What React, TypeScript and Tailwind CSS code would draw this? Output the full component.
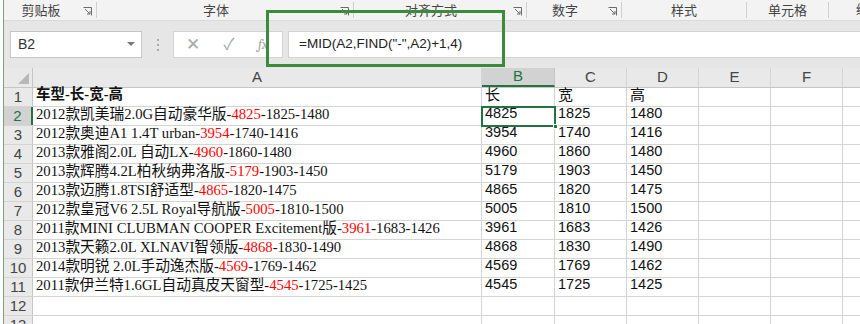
import * as React from "react";

const UI = { fontFamily: '"Liberation Sans", "Noto Sans CJK SC", sans-serif' };
const SERIF = { fontFamily: '"Liberation Serif", "Noto Sans CJK SC", serif' };

const groups = [
  { label: "剪贴板", w: "w-[93px]", launcher: true },
  { label: "字体", w: "w-[257px]", launcher: true },
  { label: "对齐方式", w: "w-[173px]", launcher: true },
  { label: "数字", w: "w-[95px]", launcher: true },
  { label: "样式", w: "w-[125px]", launcher: false },
  { label: "单元格", w: "w-[82px]", launcher: false },
];

const cars = [
  "2012款凯美瑞2.0G自动豪华版-4825-1825-1480",
  "2012款奥迪A1 1.4T urban-3954-1740-1416",
  "2013款雅阁2.0L 自动LX-4960-1860-1480",
  "2013款辉腾4.2L柏秋纳弗洛版-5179-1903-1450",
  "2013款迈腾1.8TSI舒适型-4865-1820-1475",
  "2012款皇冠V6 2.5L Royal导航版-5005-1810-1500",
  "2011款MINI CLUBMAN COOPER Excitement版-3961-1683-1426",
  "2013款天籁2.0L XLNAVI智领版-4868-1830-1490",
  "2014款明锐 2.0L手动逸杰版-4569-1769-1462",
  "2011款伊兰特1.6GL自动真皮天窗型-4545-1725-1425",
];

const cols = ["A", "B", "C", "D", "E", "F", ""];
const colW = ["w-[449px]", "w-[73px]", "w-[72px]", "w-[72px]", "w-[72px]", "w-[72px]", "w-[40px]"];

const Launcher = () => (
  <svg width="9" height="9" viewBox="0 0 9 9" className="mt-[3px]">
    <path d="M0.5 0.5 H8.5 V8.5" fill="none" stroke="#6b6b6b" strokeWidth="1" />
    <path d="M2 2 L7 7 M4 7 H7 V4" fill="none" stroke="#6b6b6b" strokeWidth="1" />
  </svg>
);

function Cell({
  w,
  children,
  className = "",
}: {
  w: string;
  children?: React.ReactNode;
  className?: string;
}) {
  return (
    <div
      className={`${w} shrink-0 h-full border-r border-[#d4d4d4] flex items-end pl-[3px] whitespace-nowrap overflow-visible ${className}`}
    >
      {children}
    </div>
  );
}

function Row({ n, children, active }: { n: number; children: React.ReactNode; active?: boolean }) {
  return (
    <div className="flex h-[19px] border-b border-[#d4d4d4]">
      <div
        className={`w-[29px] shrink-0 flex items-center justify-center text-[15px] ${
          active
            ? "bg-[#d2d2d2] text-[#217346] border-r-2 border-[#217346]"
            : "bg-[#e9e9e9] text-[#444] border-r border-[#c6c6c6]"
        }`}
        style={UI}
      >
        {n}
      </div>
      {children}
    </div>
  );
}

export default function App() {
  return (
    <div className="w-[860px] h-[324px] overflow-hidden flex bg-white relative" style={UI}>
      <div className="w-[3px] shrink-0 bg-white" />
      <div className="w-px shrink-0 bg-[#7fa07f]" />
      <div className="flex-1 flex flex-col min-w-0">
        {/* ribbon group labels */}
        <div className="h-[20px] flex bg-[#f3f3f3] text-[13px] text-[#444] shrink-0">
          {groups.map((g) => (
            <div key={g.label} className={`${g.w} shrink-0 flex items-center border-r border-[#d0d0d0] my-[2px]`}>
              <div className="flex-1 text-center leading-none">{g.label}</div>
              {g.launcher ? (
                <div className="w-[18px] flex justify-center">
                  <Launcher />
                </div>
              ) : null}
            </div>
          ))}
          <div className="flex items-center pl-[27px] whitespace-nowrap">编辑</div>
        </div>

        {/* formula bar */}
        <div className="h-[48px] bg-[#e6e6e6] border-t border-[#dadada] flex items-start pt-[10px] shrink-0">
          <div className="ml-[6px] w-[132px] h-[27px] bg-white border border-[#c6c6c6] flex items-center justify-between pl-[7px] pr-[6px]">
            <span className="text-[14px] text-[#333]">B2</span>
            <svg width="8" height="5" viewBox="0 0 8 5">
              <path d="M0 0 H8 L4 4 Z" fill="#7a7a7a" />
            </svg>
          </div>
          <div className="w-[31px] h-[27px] flex flex-col items-center justify-center gap-[3px]">
            <div className="w-[2px] h-[2px] bg-[#aaa]" />
            <div className="w-[2px] h-[2px] bg-[#aaa]" />
            <div className="w-[2px] h-[2px] bg-[#aaa]" />
          </div>
          <div className="w-[110px] h-[27px] bg-white border border-[#d4d4d4] flex items-center text-[#a8a8a8]">
            <span className="w-[38px] text-center text-[17px]">✕</span>
            <span className="w-[34px] text-center text-[16px]">✓</span>
            <span className="w-[34px] text-center italic text-[14px] font-serif">fx</span>
          </div>
          <div className="ml-[5px] flex-1 h-[27px] bg-white border-y border-l border-[#d4d4d4] flex items-center pl-[10px] text-[13.5px] text-[#222]">
            =MID(A2,FIND("-",A2)+1,4)
          </div>
        </div>

        {/* column headers */}
        <div className="flex h-[20px] shrink-0 bg-[#e9e9e9] border-b border-[#c6c6c6] text-[15px] text-[#444]">
          <div className="w-[29px] shrink-0 border-r border-[#c6c6c6] flex items-end justify-end pr-[3px] pb-[3px]">
            <svg width="11" height="11" viewBox="0 0 11 11">
              <path d="M11 0 V11 H0 Z" fill="#b8b8b8" />
            </svg>
          </div>
          {cols.map((c, i) => (
            <div
              key={i}
              className={`${colW[i]} shrink-0 flex items-center justify-center border-r ${
                c === "B"
                  ? "bg-[#d2d2d2] text-[#217346] border-b-2 border-b-[#217346] border-r-[#c6c6c6]"
                  : "border-[#d4d4d4]"
              }`}
            >
              {c}
            </div>
          ))}
        </div>

        {/* grid */}
        <div className="flex flex-col text-[#111]">
          <Row n={1}>
            <Cell w={colW[0]}>
              <span className="font-bold text-[14.5px]" style={SERIF}>
                车型-长-宽-高
              </span>
            </Cell>
            {["长", "宽", "高"].map((t, i) => (
              <Cell key={t} w={colW[i + 1]}>
                <span className="text-[15px]" style={UI}>
                  {t}
                </span>
              </Cell>
            ))}
            <Cell w={colW[4]} />
            <Cell w={colW[5]} />
            <Cell w={colW[6]} />
          </Row>
          {cars.map((s, r) => {
            const idx = s.indexOf("-", s.indexOf("款"));
            const head = s.slice(0, idx + 1);
            const red = s.slice(idx + 1, idx + 5);
            const tail = s.slice(idx + 5);
            const nums = s.slice(idx + 1).split("-");
            return (
              <Row key={r} n={r + 2} active={r === 0}>
                <Cell w={colW[0]}>
                  <span className="text-[14.7px]" style={SERIF}>
                    {head}
                    <span className="text-[#ff0000]">{red}</span>
                    {tail}
                  </span>
                </Cell>
                {nums.map((v, i) => (
                  <Cell key={i} w={colW[i + 1]} className={i === 0 && r === 0 ? "relative" : ""}>
                    <span className="text-[14.5px]" style={UI}>
                      {v}
                    </span>
                    {i === 0 && r === 0 ? (
                      <div className="absolute -left-[1px] -top-[1px] w-[75px] h-[21px] border-2 border-[#217346]">
                        <div className="absolute -right-[4px] -bottom-[4px] w-[5px] h-[5px] bg-[#217346] border border-white" />
                      </div>
                    ) : null}
                  </Cell>
                ))}
                <Cell w={colW[4]} />
                <Cell w={colW[5]} />
                <Cell w={colW[6]} />
              </Row>
            );
          })}
          {[12, 13].map((n) => (
            <Row key={n} n={n}>
              {colW.map((w, i) => (
                <Cell key={i} w={w} />
              ))}
            </Row>
          ))}
        </div>
      </div>

      {/* annotation box */}
      <div className="absolute left-[266px] top-[10px] w-[239px] h-[57px] border-[3px] border-[#3a8b3a]" />
    </div>
  );
}
